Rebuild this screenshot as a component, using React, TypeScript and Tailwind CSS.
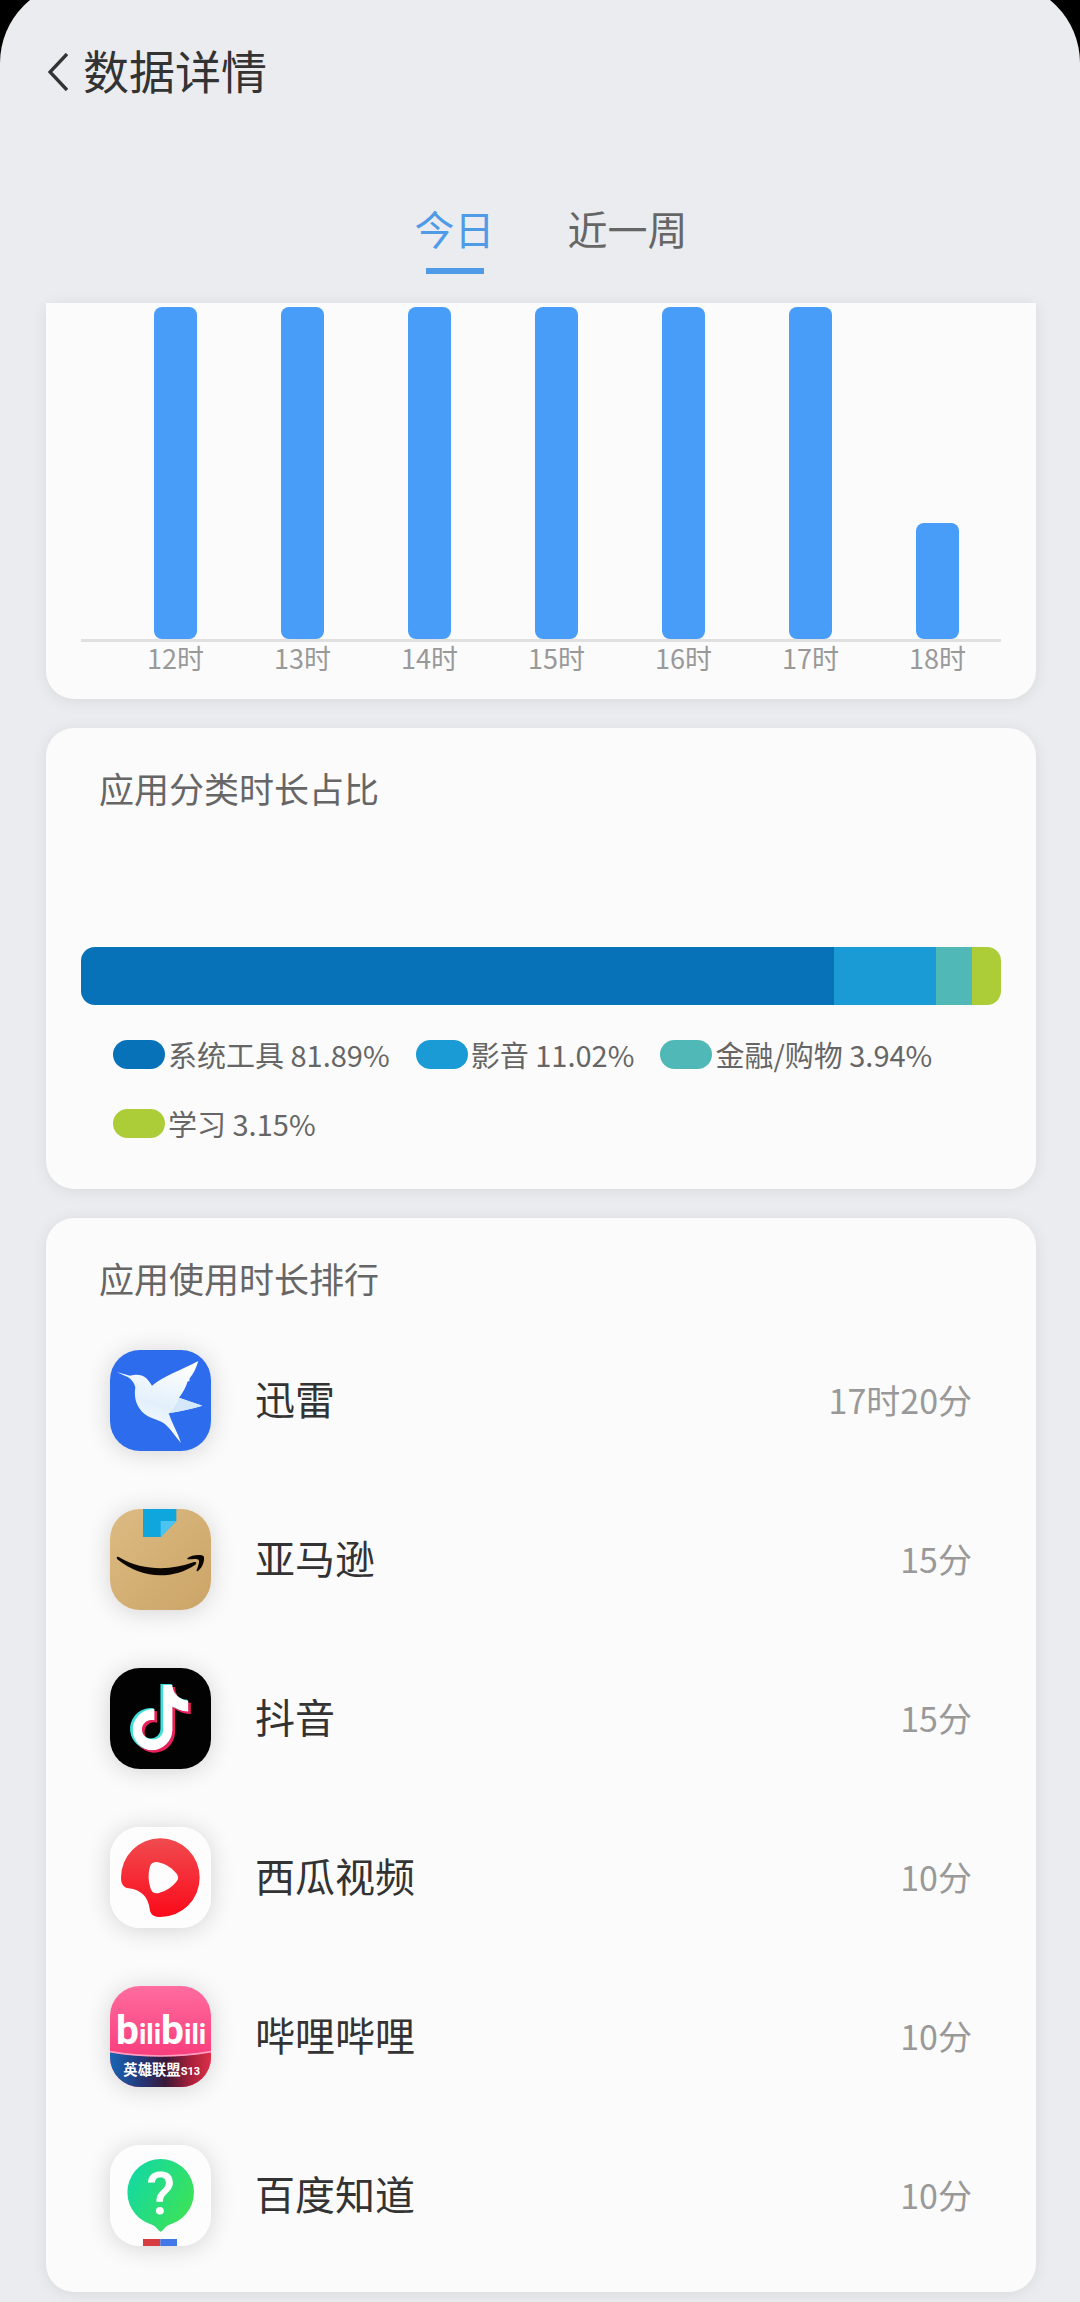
/**
 * Detalhes de uso dos aplicativos
 * Gráfico por hora, proporção por categoria e ranking de tempo de uso
 */

import React, { useState } from 'react';

interface HourUsage {
  hour: string;
  minutes: number;
}

interface CategoryUsage {
  name: string;
  percent: number;
  color: string;
}

interface AppUsage {
  name: string;
  time: string;
  icon: React.FC;
}

const BAR_MAX_HEIGHT = 332;
const MAX_MINUTES = 60;

const hours: HourUsage[] = [
  { hour: '12时', minutes: 60 },
  { hour: '13时', minutes: 60 },
  { hour: '14时', minutes: 60 },
  { hour: '15时', minutes: 60 },
  { hour: '16时', minutes: 60 },
  { hour: '17时', minutes: 60 },
  { hour: '18时', minutes: 21 },
];

const categories: CategoryUsage[] = [
  { name: '系统工具', percent: 81.89, color: 'bg-[#0872b9]' },
  { name: '影音', percent: 11.02, color: 'bg-[#1b9bd5]' },
  { name: '金融/购物', percent: 3.94, color: 'bg-[#50b9b7]' },
  { name: '学习', percent: 3.15, color: 'bg-[#accd38]' },
];

const XunleiIcon: React.FC = () => (
  <svg viewBox="0 0 303 303" className="h-full w-full" aria-hidden="true">
    <defs>
      <linearGradient id="xunlei-wing" x1="0.7" y1="0" x2="0.4" y2="1">
        <stop offset="0" stopColor="#ffffff" />
        <stop offset="0.55" stopColor="#e3f0fb" />
        <stop offset="1" stopColor="#ffffff" />
      </linearGradient>
    </defs>
    <rect width="303" height="303" fill="#2d6ded" />
    <path
      d="M20 66 L60 77 C78 71 97 74 107 83 C115 90 120 98 126 107 C160 78 215 60 265 33 C258 56 250 72 239 85 L238 94 L233 94 C228 112 218 130 207 143 L277 167 C245 176 210 184 176 190 C186 220 204 250 213 279 C198 262 184 240 168 225 C150 207 118 208 96 185 C76 164 72 137 76 112 C72 96 62 84 46 78 Z"
      fill="url(#xunlei-wing)"
    />
    <path d="M207 143 L277 167 C245 176 210 184 176 190 C190 178 200 162 207 143 Z" fill="#d5e8f9" />
  </svg>
);

const AmazonIcon: React.FC = () => (
  <svg viewBox="0 0 303 303" className="h-full w-full" aria-hidden="true">
    <defs>
      <linearGradient id="amazon-box" x1="0" y1="0" x2="1" y2="1">
        <stop offset="0" stopColor="#dcbb82" />
        <stop offset="1" stopColor="#cba467" />
      </linearGradient>
    </defs>
    <rect width="303" height="303" fill="url(#amazon-box)" />
    <path d="M99 0 H199 V36 L152 84 H99 Z" fill="#0fa6de" />
    <path d="M152 36 H199 L152 84 Z" fill="#4cc3f0" />
    <path
      d="M20 146 C20 142 24 142 30 146 C95 184 180 186 250 160 C258 157 262 162 256 167 C190 212 95 212 22 151 Z"
      fill="#0b0602"
    />
    <path
      d="M233 147 C245 136 277 136 281 142 C285 150 280 175 264 186 C261 188 259 186 260 183 C265 171 269 157 266 153 C262 148 248 150 236 151 C231 151 231 149 233 147 Z"
      fill="#0b0602"
    />
  </svg>
);

const NOTE_PATH =
  'M448,209.91a210.06,210.06,0,0,1-122.77-39.25V349.38A162.55,162.55,0,1,1,185,188.31V278.2a74.62,74.62,0,1,0,52.23,71.18V0l88,0a121.18,121.18,0,0,0,1.86,22.17h0A122.18,122.18,0,0,0,381,102.39a121.43,121.43,0,0,0,67,20.14Z';

const DouyinIcon: React.FC = () => (
  <svg viewBox="0 0 303 303" className="h-full w-full" aria-hidden="true">
    <defs>
      <clipPath id="douyin-overlap">
        <path d={NOTE_PATH} transform="translate(68 51) scale(0.385)" />
      </clipPath>
    </defs>
    <rect width="303" height="303" fill="#020202" />
    <path d={NOTE_PATH} transform="translate(70 57) scale(0.385)" fill="#e6225c" />
    <path d={NOTE_PATH} transform="translate(60 48) scale(0.385)" fill="#3fe0dc" />
    <g clipPath="url(#douyin-overlap)">
      <path d={NOTE_PATH} transform="translate(62 50) scale(0.385)" fill="#ffffff" />
    </g>
  </svg>
);

const XiguaIcon: React.FC = () => (
  <svg viewBox="0 0 303 303" className="h-full w-full" aria-hidden="true">
    <defs>
      <linearGradient id="xigua-red" x1="0" y1="0" x2="0" y2="1">
        <stop offset="0" stopColor="#f04b50" />
        <stop offset="1" stopColor="#fb0a1a" />
      </linearGradient>
    </defs>
    <rect width="303" height="303" fill="#fdfdfd" />
    <path
      d="M33 152 A118 118 0 1 1 151 270 C129 270 121 261 119 245 C115 210 92 188 56 184 C40 181 33 170 33 152 Z"
      fill="url(#xigua-red)"
    />
    <path
      d="M120 118 C124 106 138 103 150 107 C172 113 188 125 200 140 C206 148 206 156 200 163 C185 182 168 192 147 198 C135 201 126 197 122 185 C114 163 114 140 120 118 Z"
      fill="#fdfdfd"
    />
  </svg>
);

const BilibiliIcon: React.FC = () => (
  <svg viewBox="0 0 303 303" className="h-full w-full" aria-hidden="true">
    <defs>
      <linearGradient id="bili-pink" x1="0" y1="0" x2="0" y2="1">
        <stop offset="0" stopColor="#ff6c9f" />
        <stop offset="0.7" stopColor="#f93d7c" />
      </linearGradient>
      <linearGradient id="bili-band" x1="0" y1="0" x2="1" y2="0">
        <stop offset="0" stopColor="#1766b4" />
        <stop offset="0.3" stopColor="#24397a" />
        <stop offset="0.55" stopColor="#3a1838" />
        <stop offset="0.8" stopColor="#a81f3a" />
        <stop offset="1" stopColor="#dc3048" />
      </linearGradient>
    </defs>
    <rect width="303" height="303" fill="url(#bili-pink)" />
    <path d="M0 198 Q152 224 303 198 V303 H0 Z" fill="url(#bili-band)" />
    <path d="M0 197 Q152 223 303 197" fill="none" stroke="#ff9ec1" strokeWidth="5" />
    <text x="18" y="174" fill="#ffffff" fontFamily="Roboto, sans-serif" fontWeight="700">
      <tspan fontSize="122">b</tspan>
      <tspan fontSize="84">ili</tspan>
      <tspan fontSize="122">b</tspan>
      <tspan fontSize="84">ili</tspan>
    </text>
    <text x="40" y="267" fill="#ffffff" fontFamily="'Noto Sans CJK SC', sans-serif" fontWeight="700">
      <tspan fontSize="43">英雄联盟</tspan>
      <tspan fontSize="33" fontFamily="Roboto, sans-serif">
        S13
      </tspan>
    </text>
  </svg>
);

const ZhidaoIcon: React.FC = () => (
  <svg viewBox="0 0 303 303" className="h-full w-full" aria-hidden="true">
    <defs>
      <linearGradient id="zhidao-green" x1="0" y1="0.2" x2="1" y2="0.8">
        <stop offset="0" stopColor="#12d8a4" />
        <stop offset="1" stopColor="#3fe352" />
      </linearGradient>
    </defs>
    <rect width="303" height="303" fill="#fdfdfd" />
    <path
      d="M152 42 A100 100 0 0 1 186 236 C172 240 166 246 158 256 Q152 264 146 256 C138 246 132 240 118 236 A100 100 0 0 1 152 42 Z"
      fill="url(#zhidao-green)"
    />
    <text
      x="152"
      y="207"
      textAnchor="middle"
      fill="#ffffff"
      fontFamily="Roboto, sans-serif"
      fontWeight="500"
      fontSize="178"
    >
      ?
    </text>
    <rect x="99" y="282" width="52" height="21" fill="#d63c40" />
    <rect x="151" y="282" width="50" height="21" fill="#4478e8" />
  </svg>
);

const apps: AppUsage[] = [
  { name: '迅雷', time: '17时20分', icon: XunleiIcon },
  { name: '亚马逊', time: '15分', icon: AmazonIcon },
  { name: '抖音', time: '15分', icon: DouyinIcon },
  { name: '西瓜视频', time: '10分', icon: XiguaIcon },
  { name: '哔哩哔哩', time: '10分', icon: BilibiliIcon },
  { name: '百度知道', time: '10分', icon: ZhidaoIcon },
];

const tabs = ['今日', '近一周'];

const HourChart: React.FC = () => (
  <section className="rounded-b-[28px] bg-[#fbfbfb] px-[35px] pb-[25px] pt-1 shadow-[0_2px_16px_rgba(0,0,0,0.08)]">
    <div className="grid grid-cols-7 items-end border-b-[3px] border-[#e0e0e0] pl-[31px]">
      {hours.map(({ hour, minutes }) => (
        <div
          key={hour}
          className="mx-auto w-[43px] rounded-lg bg-[#489df8]"
          style={{ height: Math.round((minutes / MAX_MINUTES) * BAR_MAX_HEIGHT) }}
        />
      ))}
    </div>
    <div className="grid grid-cols-7 pl-[31px] text-center text-[27px] leading-8 text-[#999999]">
      {hours.map(({ hour }) => (
        <span key={hour}>{hour}</span>
      ))}
    </div>
  </section>
);

const CategoryCard: React.FC = () => (
  <section className="rounded-[28px] bg-[#fbfbfb] px-[35px] pb-[46px] pt-9 shadow-[0_2px_16px_rgba(0,0,0,0.08)]">
    <h2 className="pl-[18px] text-[35px] leading-[48px] text-[#666666]">应用分类时长占比</h2>
    <div className="mt-[135px] flex h-[58px] overflow-hidden rounded-[14px]">
      {categories.map(({ name, percent, color }) => (
        <div key={name} className={color} style={{ width: `${percent}%` }} />
      ))}
    </div>
    <ul className="mt-[29px] flex flex-wrap gap-x-[26px] gap-y-[29px] pl-8 text-[29px] leading-10 text-[#666666]">
      {categories.map(({ name, percent, color }) => (
        <li key={name} className="flex items-center gap-[3px]">
          <span className={`h-[29px] w-[52px] rounded-full ${color}`} />
          <span>
            {name} {percent}%
          </span>
        </li>
      ))}
    </ul>
  </section>
);

const RankingCard: React.FC = () => (
  <section className="rounded-[28px] bg-[#fbfbfb] pb-[17px] pt-9 shadow-[0_2px_16px_rgba(0,0,0,0.08)]">
    <h2 className="pl-[53px] text-[35px] leading-[48px] text-[#666666]">应用使用时长排行</h2>
    <ul className="mt-[19px]">
      {apps.map(({ name, time, icon: AppIcon }) => (
        <li key={name} className="flex h-[159px] items-center px-16">
          <div className="h-[101px] w-[101px] overflow-hidden rounded-[30px] shadow-[0_2px_24px_rgba(0,0,0,0.16)]">
            <AppIcon />
          </div>
          <span className="ml-11 pb-[6px] text-[40px] leading-[48px] text-[#333333]">{name}</span>
          <span className="ml-auto pb-[2px] text-[34px] leading-[48px] text-[#999999]">{time}</span>
        </li>
      ))}
    </ul>
  </section>
);

export default function App() {
  const [activeTab, setActiveTab] = useState(tabs[0]);

  return (
    <div className="min-h-screen overflow-hidden bg-black font-['Noto_Sans_CJK_SC',sans-serif]">
      {/* O topo arredondado começa um pouco acima da janela */}
      <div className="-mt-[18px] min-h-screen rounded-t-[81px] bg-[#ebecf0] pb-[10px] pt-[18px]">
        <header className="flex h-36 items-center pl-12">
          <button type="button" className="flex items-center gap-[15px] text-[#333333]">
            <svg viewBox="0 0 20 38" className="h-[38px] w-5" fill="none" stroke="currentColor" strokeWidth="3.4" aria-hidden="true">
              <path d="M19 1 L2 19 L19 37" />
            </svg>
            <span className="pb-[6px] text-[46px] leading-[64px]">数据详情</span>
          </button>
        </header>

        <nav className="flex items-start justify-center gap-[73px] pb-[29px] pl-[22px] pt-[62px]">
          {tabs.map((tab) => (
            <button
              key={tab}
              type="button"
              onClick={() => setActiveTab(tab)}
              className={`flex flex-col items-center text-[40px] leading-[44px] ${
                activeTab === tab ? 'text-[#4f9be8]' : 'text-[#666666]'
              }`}
            >
              {tab}
              <span className={`mt-[18px] h-[6px] w-[58px] ${activeTab === tab ? 'bg-[#4f9be8]' : 'bg-transparent'}`} />
            </button>
          ))}
        </nav>

        <main className="flex flex-col gap-[29px] pl-[46px] pr-11">
          <HourChart />
          <CategoryCard />
          <RankingCard />
        </main>
      </div>
    </div>
  );
}
